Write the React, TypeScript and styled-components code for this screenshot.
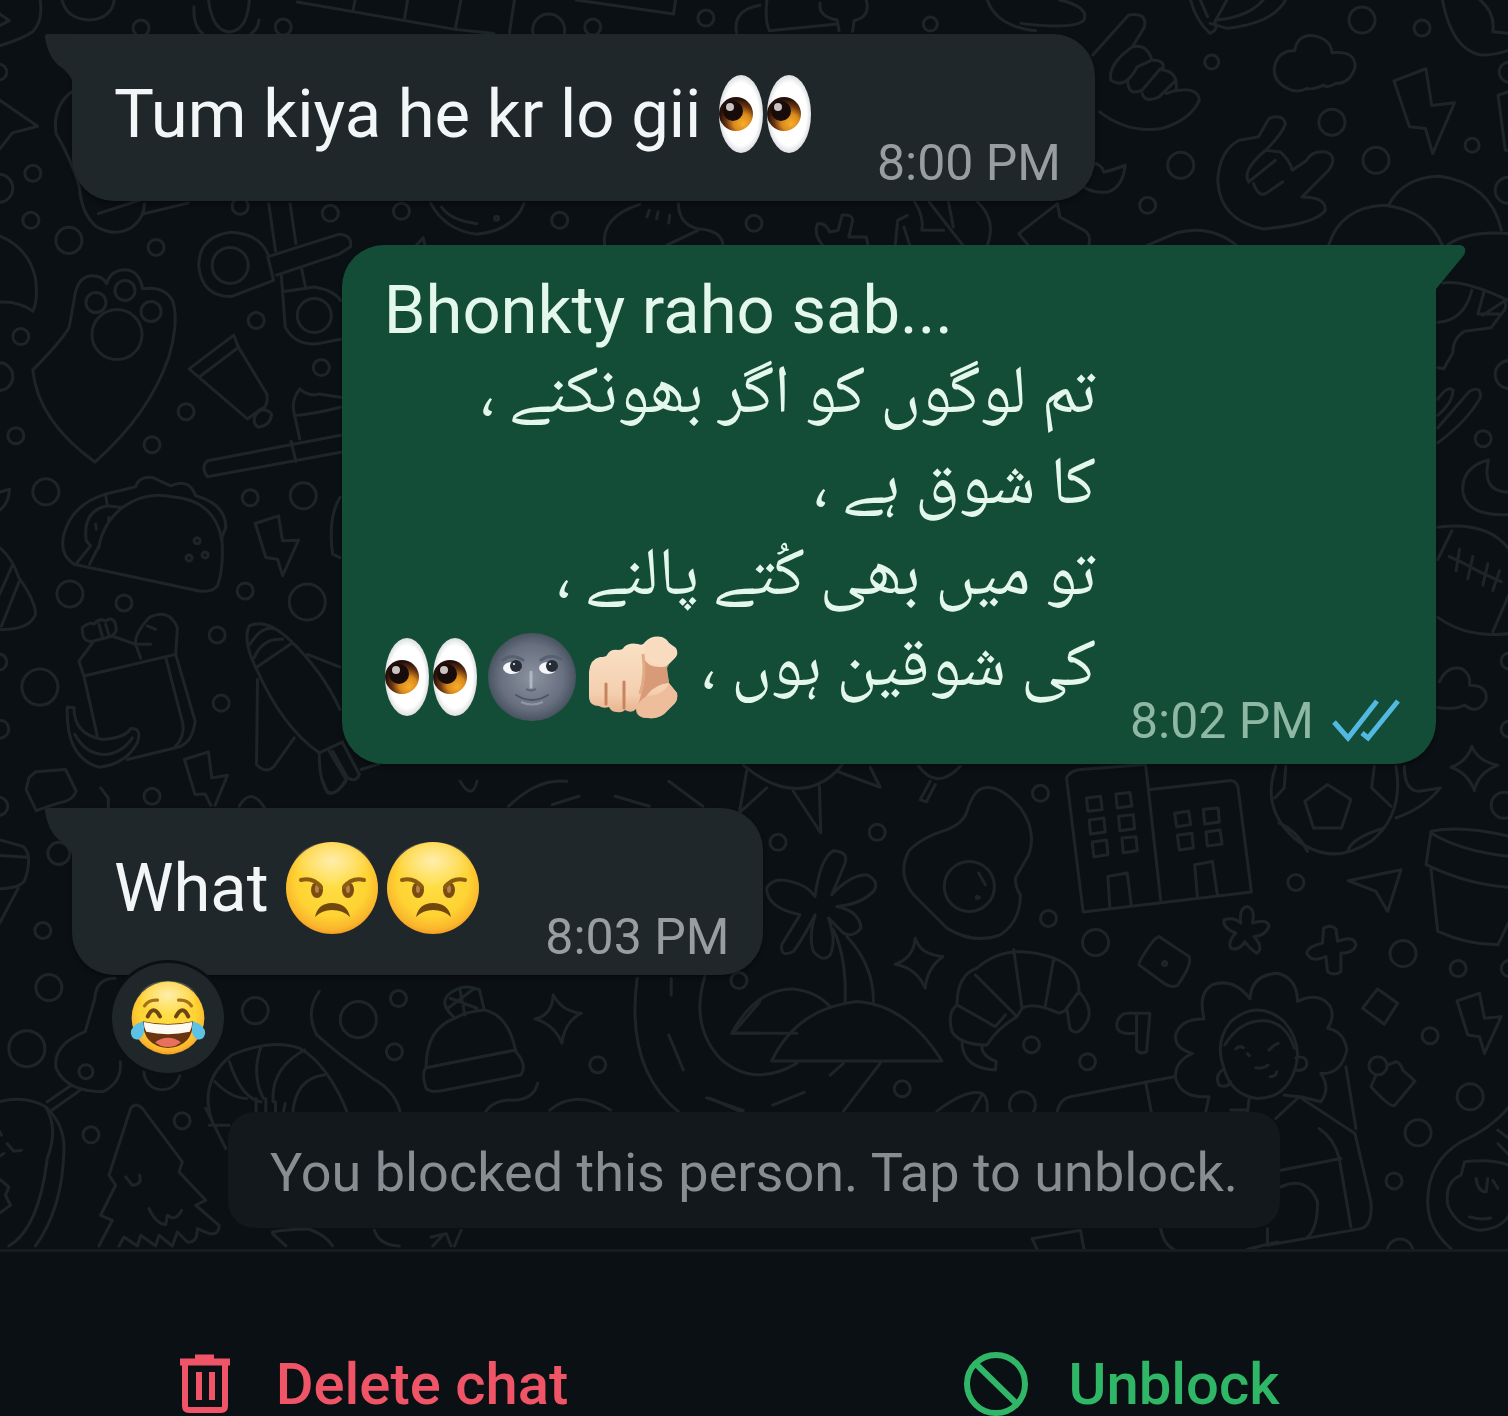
import React from "react";
import styled, { createGlobalStyle, css } from "styled-components";

const color = {
  page: "#0b1014",
  doodle: "#1e2528",
  incoming: "#1f272a",
  outgoing: "#144d37",
  notice: "#12181b",
  text: "#f3f6f7",
  outgoingText: "#e4f7ec",
  time: "#979da0",
  outgoingTime: "#8fb8a4",
  noticeText: "#868e92",
  danger: "#ef5567",
  accent: "#2fb767",
  read: "#53b9e0",
};

const GlobalStyle = createGlobalStyle`
  *, *::before, *::after { box-sizing: border-box; }
  body {
    margin: 0;
    background: ${color.page};
    color: ${color.text};
    font-family: Roboto, "Noto Sans", "Liberation Sans", sans-serif;
  }
  button {
    margin: 0;
    padding: 0;
    border: 0;
    background: none;
    font: inherit;
    cursor: pointer;
  }
`;

const Screen = styled.div`
  display: flex;
  flex-direction: column;
  min-height: 100vh;
`;

const Chat = styled.main`
  position: relative;
  flex: 1;
  overflow: hidden;
`;

const Wallpaper = styled.svg`
  position: absolute;
  inset: 0;
  width: 100%;
  height: 100%;
  fill: none;
  stroke: ${color.doodle};
  stroke-width: 3px;
  stroke-linecap: round;
  stroke-linejoin: round;

  path {
    vector-effect: non-scaling-stroke;
  }
`;

const Thread = styled.div`
  position: relative;
  display: flex;
  flex-direction: column;
  gap: 44px;
  padding: 34px 72px 20px;
`;

const Message = styled.article<{ $own?: boolean }>`
  display: flex;
  flex-direction: column;
  align-items: ${(p) => (p.$own ? "flex-end" : "flex-start")};
`;

const incomingShape = css`
  background: ${color.incoming};
  color: ${color.text};
  border-radius: 0 42px 42px 42px;
  padding: 41px 34px 9px 42px;
  column-gap: 58px;

  &::before {
    right: 100%;
    width: 29px;
    height: 48px;
    margin-right: -1px;
    background: ${color.incoming};
    clip-path: path("M29 0 H4 Q0 0 1 4 Q4 22 14 31 Q24 37 29 48 Z");
  }
`;

const outgoingShape = css`
  background: ${color.outgoing};
  color: ${color.outgoingText};
  border-radius: 42px 0 42px 42px;
  padding: 26px 36px 14px 42px;
  column-gap: 34px;

  &::before {
    left: 100%;
    width: 31px;
    height: 46px;
    margin-left: -1px;
    background: ${color.outgoing};
    clip-path: path("M0 0 H25 Q33 2 29 10 L1 44 L0 46 Z");
  }
`;

const Bubble = styled.div<{ $own?: boolean }>`
  position: relative;
  display: flex;
  align-items: flex-end;
  box-shadow: 0 3px 4px rgba(0, 0, 0, 0.3);

  &::before {
    content: "";
    position: absolute;
    top: 0;
  }

  ${(p) => (p.$own ? outgoingShape : incomingShape)}
`;

const Body = styled.div<{ $own?: boolean }>`
  padding-bottom: ${(p) => (p.$own ? 34 : 39)}px;
`;

const Line = styled.p`
  margin: 0;
  font-size: 67px;
  line-height: 78px;
`;

const Verse = styled.p`
  margin: 0;
  font-family: "Noto Naskh Arabic UI", "Noto Naskh Arabic", "Noto Sans Arabic", "DejaVu Sans", sans-serif;
  font-size: 68px;
  line-height: 91px;
  white-space: pre-line;
`;

const Meta = styled.footer<{ $own?: boolean }>`
  display: flex;
  align-items: center;
  gap: 18px;
  color: ${(p) => (p.$own ? color.outgoingTime : color.time)};
  font-size: 50px;
  line-height: 58px;
  white-space: nowrap;
`;

const Ticks = styled.svg`
  width: 68px;
  height: 46px;
  fill: none;
  stroke: ${color.read};
  stroke-width: 5px;
`;

const EmojiArt = styled.svg<{ $size?: number }>`
  width: ${(p) => p.$size ?? 94}px;
  height: ${(p) => p.$size ?? 94}px;
`;

const InlineEmoji = styled.span`
  svg {
    margin: -8px 7px -8px 0;
    vertical-align: -16px;
  }

  ${Verse} & svg {
    vertical-align: -22px;
  }
`;

const Reaction = styled.button`
  position: relative;
  display: grid;
  place-items: center;
  width: 118px;
  height: 116px;
  margin: -15px 0 0 37px;
  border: 3px solid ${color.page};
  border-radius: 50%;
  background: ${color.incoming};
`;

const Notice = styled.button`
  align-self: center;
  padding: 28px 42px 22px;
  margin-top: -8px;
  border-radius: 26px;
  background: ${color.notice};
  color: ${color.noticeText};
  font-size: 54px;
  line-height: 66px;
`;

const Actions = styled.footer`
  display: grid;
  grid-template-columns: 1fr 1fr;
  padding: 100px 12px 0 0;
  border-top: 3px solid #161d20;
  background: ${color.page};
`;

const Action = styled.button<{ $tone: "danger" | "accent" }>`
  display: flex;
  align-items: center;
  justify-content: center;
  gap: ${(p) => (p.$tone === "danger" ? 46 : 40)}px;
  color: ${(p) => color[p.$tone]};
  font-size: 58px;
  font-weight: 500;
  line-height: 64px;
`;

const ActionIcon = styled.svg`
  flex: none;
  fill: none;
  stroke: currentColor;
`;

/* ---------- wallpaper doodles ---------- */

const dots: [number, number, number][] = [
  [142, 28, 8], [284, 27, 8], [706, 18, 8], [549, 30, 16], [593, 27, 8], [34, 173, 8], [0, 188, 14],
  [32, 220, 8], [70, 240, 13], [157, 247, 8], [257, 320, 8], [22, 336, 8], [0, 376, 14], [322, 367, 8],
  [187, 411, 8], [17, 435, 8], [153, 444, 8], [241, 206, 8], [331, 213, 8], [402, 211, 8], [560, 220, 8],
  [754, 223, 8], [97, 302, 10], [126, 290, 10], [152, 311, 10], [118, 334, 25], [231, 265, 18],
  [315, 315, 17], [0, 72, 8], [930, 24, 7], [1211, 62, 7], [1361, 20, 13], [1421, 28, 8], [1331, 122, 13],
  [1180, 165, 13], [1375, 160, 13], [1147, 205, 8], [1471, 145, 7], [1508, 72, 10], [1507, 190, 13],
  [1482, 438, 8], [1508, 374, 14], [1508, 660, 8], [1508, 728, 8], [47, 491, 13], [251, 497, 8],
  [304, 495, 13], [71, 593, 13], [125, 602, 8], [246, 590, 8], [308, 601, 18], [218, 634, 8], [222, 702, 8],
  [41, 686, 18], [0, 661, 8], [1, 728, 9], [153, 795, 8], [0, 805, 9], [1040, 792, 8], [1295, 881, 8],
  [1048, 917, 8], [1095, 941, 13], [1402, 952, 13], [1457, 967, 8], [1503, 804, 13], [1508, 967, 8],
  [44, 929, 8], [50, 986, 13], [28, 1047, 18], [256, 1009, 13], [359, 1018, 18], [399, 997, 8],
  [395, 1050, 8], [598, 1063, 8], [60, 852, 11], [163, 1070, 18], [739, 979, 8], [778, 841, 8],
  [877, 831, 8], [902, 1087, 8], [1031, 1043, 8], [1087, 1060, 8], [1022, 1103, 13], [969, 885, 25],
  [92, 1133, 8], [183, 1119, 8], [1429, 1034, 8], [1469, 1095, 13], [1417, 1131, 13], [1393, 1179, 8],
  [1377, 1064, 9], [1399, 1250, 13], [1164, 962, 2], [87, 1070, 7], [198, 540, 3], [190, 557, 3], [206, 554, 3],
  [977, 896, 1], [497, 218, 2],
];

const doodles: { place: string; d: string[] }[] = [
  {
    /* top left: star, monster, binoculars, badge, tube */
    place: "scale(.4847 .3333)",
    d: [
      "M85 0Q92 60 70 95Q50 115 0 138M0 40L22 62L0 78",
      "M130 0Q140 58 188 60Q232 55 238 0",
      "M402 20Q400 80 420 100M432 0Q440 92 475 96Q512 92 516 0M536 60Q534 88 520 100",
      "M615 6L940 88L952 0M730 28L734 0M836 54L842 0M1062 0L1052 98M940 88L1020 100M1190 0L1390 42L1394 0",
      "M1520 100Q1510 30 1568 16",
      "M0 298L80 378L28 398L0 450",
      "M150 275Q110 320 118 400Q150 480 166 560Q170 640 200 678Q240 712 275 680Q300 650 300 610M205 640L290 600M300 640L390 608",
      "M0 706Q60 740 75 830Q82 900 70 932Q40 900 0 905",
      "M155 900Q160 830 190 826Q215 825 222 850Q230 808 262 808Q290 812 296 865Q340 855 358 900Q372 960 350 1070Q310 1240 198 1384Q80 1260 70 1108Q130 1020 145 980Z",
      "M556 610L570 752M600 610L612 730M556 768L700 702Q730 705 724 740L700 762L572 824M556 768Q540 700 478 696Q410 710 412 800Q420 890 480 888L566 840L554 768M582 826L590 980Q610 1035 655 1030L704 1016M624 806L632 862M584 874L650 860Q690 870 704 900",
      "M392 1105L484 1004L494 1040L412 1130ZM492 1036L552 1180Q556 1220 540 1225L512 1255L412 1130M530 1240Q545 1215 562 1240Q560 1275 535 1280Q520 1265 530 1240",
      "M890 610Q920 690 985 702Q1060 690 1082 610M912 620Q930 660 985 670M860 735L874 712L878 735",
      "M1248 735Q1240 650 1320 612M1335 650L1340 630M1355 655L1358 635M1380 668L1382 645M1400 610Q1400 670 1440 685Q1490 690 1492 735M1375 735L1440 690",
      "M704 1190L660 1180Q640 1190 620 1165Q602 1200 608 1235L620 1315M608 1245Q650 1240 704 1220M704 1304L430 1380Q415 1400 430 1428L704 1355M602 1322L612 1382",
    ],
  },
  {
    /* top right: shaka and horns hands, cloud, bolt, leaf */
    place: "translate(750 0) scale(.4834 .3333)",
    d: [
      "M35 0Q30 60 40 92L180 72M145 10Q140 50 180 60L184 92M240 0Q250 50 215 62L212 94",
      "M490 0Q510 80 590 92M640 0Q700 20 690 60Q670 90 560 70",
      "M910 0Q920 60 950 100Q968 90 960 65L985 0M950 70L985 85Q1080 70 1106 0M965 60Q1030 50 1060 0M930 0L945 50",
      "M708 165L782 45Q820 35 815 80L790 140M790 140Q820 130 830 180Q860 180 852 210Q885 215 880 270L860 280M790 140Q740 190 745 240Q775 270 800 200L830 180M780 240Q780 290 810 270L848 205M810 280Q815 310 845 290L880 240M880 272Q925 260 928 300Q910 360 850 385Q780 400 722 335",
      "M1110 265Q1075 240 1085 190Q1095 150 1125 152Q1130 105 1160 106Q1200 115 1202 158Q1250 150 1250 200Q1240 250 1210 250Q1190 265 1185 255Q1160 270 1150 265Q1130 280 1110 265Z",
      "M1330 242L1396 206L1408 316L1455 308L1410 460L1395 385L1362 380Z",
      "M1430 0Q1450 150 1510 165Q1540 165 1568 150M1508 0Q1540 40 1534 95L1568 100",
      "M1568 275L1545 285L1560 450L1568 450",
      "M1050 410L1072 355Q1100 340 1106 370Q1100 400 1065 450L1095 455Q1115 480 1120 510L1150 480Q1160 450 1190 455Q1215 470 1195 510L1140 590Q1190 590 1188 630Q1170 670 1060 686Q970 660 966 540Q970 450 1010 420ZM1065 450Q1015 510 1030 545L1085 480M1040 550Q1050 590 1065 580L1100 545",
      "M700 500L715 490Q730 500 730 515Q750 510 775 495Q770 560 740 575Q710 580 690 560",
      "M150 735Q130 700 140 670Q155 665 165 695L182 690L190 645Q210 640 212 660L204 710L240 710L244 735M300 735L305 660L325 645M318 680L330 735M340 605Q360 650 355 690L400 690M370 605L440 735M410 605L420 680M470 605Q510 660 490 735",
      "M555 700L635 610L640 650L690 690Q705 700 700 735M555 700L575 735M820 735L880 698Q950 670 1005 735",
      "M1195 735Q1220 620 1310 615Q1400 630 1430 735M1320 612Q1350 530 1425 528Q1530 550 1552 690M1440 735Q1480 690 1568 700",
    ],
  },
  {
    /* right edge beside the outgoing bubble */
    place: "translate(1400 220) scale(.3333 .3571)",
    d: [
      "M125 175Q190 165 324 225M110 285Q190 280 212 195M250 195L230 262L300 262Q320 245 310 225L245 265M300 262L270 300L190 310Q155 330 155 370L128 415L110 412",
      "M110 500Q140 460 156 475Q155 510 110 545M110 580L205 478Q240 460 238 495Q200 560 110 622",
      "M262 670Q180 690 185 760Q200 830 324 822M262 670Q240 760 324 760",
      "M110 858Q260 840 324 920M110 948L152 868M110 1110Q200 1170 324 1155M275 1150L324 1045",
      "M145 940L190 960L240 985L300 1010M175 920L165 980M215 940L200 1002M260 960L245 1020M295 980L275 1035",
      "M115 1290Q140 1240 185 1255Q210 1270 205 1300Q260 1300 255 1340Q230 1385 190 1355Q160 1370 110 1362",
    ],
  },
  {
    /* left edge: taco, cookie, lunch bag, banana, rocket */
    place: "translate(0 380) scale(.3333)",
    d: [
      "M0 390Q30 370 32 325L0 335",
      "M0 498Q40 530 60 590Q110 660 110 700Q90 750 0 745M40 555L0 645M62 600L8 735",
      "M225 550Q180 520 195 460Q220 370 320 340L410 318Q420 285 460 290L515 315Q570 290 590 345Q680 370 680 440L668 470Q675 560 655 615Q640 635 600 630L225 550M300 500Q310 430 370 380Q440 330 520 348Q650 360 668 480M320 340L325 375Q250 390 262 480L275 495L235 545M300 495L272 550M325 375L368 380M290 430L292 445M330 410L328 420",
      "M768 428L838 405L850 480L898 478L850 584L835 535L800 530Z",
      "M1022 350Q985 410 1000 520L1022 530",
      "M255 885L240 840L285 780L340 765L410 790Q405 760 450 710Q510 680 535 740L530 820L255 885L295 1065M285 780Q250 790 250 740Q275 720 285 730Q300 710 320 720Q350 700 352 750L340 765M300 730L310 765M320 730L330 762M410 790L425 832M410 790L455 790M445 735L470 745M500 830L552 1030Q555 1070 530 1095M530 820L588 1020Q580 1090 530 1100L385 1135",
      "M205 978L225 980Q225 1060 310 1075Q380 1070 395 1042Q430 1040 415 1085Q380 1150 300 1158Q200 1130 205 978M228 1060Q260 1120 320 1120Q370 1115 400 1070",
      "M90 1190L110 1172L200 1165L232 1230Q220 1260 180 1265L112 1288L82 1225Z",
      "M305 1220L328 1250V1278M720 1275Q755 1215 795 1278",
      "M556 1135L628 1112L638 1190L685 1182L648 1272M556 1135L588 1240L618 1238L635 1272",
      "M770 860Q730 780 750 735Q800 710 870 775Q970 870 1022 985M770 860L880 785M752 790Q790 730 830 745M765 830Q790 770 850 775M770 860Q850 1040 960 1115L1030 1082M775 895L772 1150Q800 1180 825 1155L885 1070M925 820L1022 858M960 1120Q960 1200 985 1235Q1010 1245 1040 1195L990 1110M1000 1110L1045 1190Q1070 1205 1080 1180L1030 1085M1085 1165L1140 1148",
    ],
  },
  {
    /* right of centre: buildings, football, bolt, flower pot */
    place: "translate(1000 680) scale(.3333)",
    d: [
      "M248 692L198 290Q210 268 240 265L435 250L480 655M450 325L690 298Q708 300 712 320L752 632L248 692M328 680L322 585L380 575L392 672M590 645L582 550L635 540L650 640",
      "M258 350L300 345L305 385L262 390ZM346 338L388 334L394 374L350 380ZM266 416L310 410L314 452L270 458ZM354 405L398 400L402 442L358 448ZM275 482L318 476L322 520L280 526ZM364 470L406 466L410 508L368 514ZM522 396L564 390L570 430L528 436ZM608 384L652 380L656 422L612 428ZM530 462L574 456L578 500L536 506ZM616 452L658 446L664 488L620 494Z",
      "M825 255Q780 380 880 470Q990 560 1110 480Q1210 400 1185 255M980 310L1050 355L1022 440H938L912 360ZM855 255L850 320L822 350M835 425Q890 450 920 510M1040 510Q1050 470 1150 440M1120 255L1112 320L1170 375M1210 255Q1210 330 1255 330L1318 320Q1270 380 1185 410",
      "M1412 195Q1430 240 1490 252Q1430 275 1420 328Q1400 275 1350 258Q1400 240 1412 195Z",
      "M1042 598L1200 565L1160 690L1125 630Z",
      "M1524 465Q1380 430 1290 450L1275 550Q1400 610 1524 618M1290 455Q1380 510 1524 525M1290 565L1310 750Q1400 790 1490 790L1524 720",
      "M738 675Q765 680 755 725Q800 710 805 735Q790 765 760 765Q790 800 768 815Q745 800 732 780Q715 810 690 800Q680 780 705 755Q665 740 670 715Q700 705 720 725Q715 680 738 675Z",
      "M968 740Q990 728 1005 742L1010 780Q1060 760 1065 790Q1060 815 1020 815L1020 870Q1000 885 980 870L975 825Q930 845 918 815Q920 795 965 785Z",
      "M475 765L565 825Q575 850 530 912Q510 920 490 905L415 850Q415 835 460 775Z",
    ],
  },
  {
    /* centre: sun, egg, palm island, croissant */
    place: "translate(700 740) scale(.3333)",
    d: [
      "M130 72Q210 140 290 142Q370 140 425 72M140 90L118 215L200 140M280 150L362 275L358 135M410 90L540 138L510 78M655 75Q710 150 780 75M690 120L660 175L678 182L705 130",
      "M850 140Q900 130 960 200Q1010 270 985 340L945 410Q945 440 960 460Q960 540 900 580Q820 610 740 560L640 460Q590 400 625 330Q660 290 740 265Q790 245 800 210Q820 145 850 140ZM835 395L855 430M830 465L838 468",
      "M345 465Q360 350 400 328Q445 330 435 365L395 460Q450 400 500 400Q540 420 520 450Q480 490 410 495Q480 510 482 560Q460 590 430 575L385 530Q410 600 390 640Q370 665 340 630Q325 590 345 520Q310 590 280 630Q240 650 245 610L300 520Q200 500 200 440Q220 405 270 420Q320 430 345 465M400 565Q440 650 435 780M440 585Q520 670 520 780",
      "M725 958H215Q290 800 470 780Q620 790 725 958M290 875H95Q170 740 280 742Q350 750 390 795M15 705Q-30 850 60 950Q160 1040 290 965M430 965L390 1000M540 965L430 1108M20 1068L130 1106M218 1090L312 1052",
      "M645 590Q660 640 728 645Q680 680 675 740Q650 680 585 668Q640 650 645 590Z",
      "M950 825Q890 860 860 910Q780 910 755 870Q740 810 770 790Q770 700 830 680Q920 600 1060 650Q1140 680 1135 750Q1180 800 1160 840Q1130 890 1108 860L1100 805L1075 815Q1000 780 965 800ZM940 625L965 800L950 825L825 700M770 790L885 855L915 820M1060 650L1035 790M1135 750L1095 805M785 905Q790 980 885 985L888 960Q840 940 845 910",
      "M1300 875Q1240 880 1250 840Q1260 810 1300 815H1348L1338 930Q1320 940 1308 925V818",
      "M710 1108Q800 1040 845 1055Q865 1070 860 1110M815 1110L845 1060M1070 1108Q1080 1070 1110 1065L1420 1005M1335 1020L1352 1110",
    ],
  },
  {
    /* below the last bubble: cup, bobble hat, seashell */
    place: "translate(0 780) scale(.4847 .3333)",
    d: [
      "M668 0Q680 70 715 0M950 0Q975 60 985 0M1050 75Q1110 -10 1170 0M1380 0L1450 75M1140 70L1195 45M1270 45L1340 75",
      "M0 175L50 195Q70 220 55 290Q50 320 0 322M0 222L60 228M40 320L0 430",
      "M240 590Q200 590 198 650L178 750Q110 790 118 860Q140 930 215 930Q255 900 250 840M150 910L100 960M168 925L110 985",
      "M660 630Q630 690 655 760Q700 820 770 890Q820 930 828 1000",
      "M940 710Q880 740 880 860Q870 870 880 920Q890 935 920 925L1075 880Q1090 850 1065 810Q1050 700 1000 685M940 710Q900 660 935 630Q960 605 990 625L1000 685Q960 690 940 710M930 650L985 680M950 625L960 700M980 620L925 680M880 858L1065 805",
      "M1142 640Q1160 690 1200 695Q1165 720 1160 785Q1145 730 1105 712Q1140 700 1142 640Z",
      "M1315 590Q1290 860 1400 990M1385 590V640M1380 760L1410 865M1568 660L1512 755H1568M1110 905Q1100 960 1050 955Q1010 960 1000 1000M1135 985Q1190 920 1260 985M1465 950L1530 990",
      "M440 1020Q410 900 480 820Q560 770 620 800Q680 850 720 1000M445 900Q480 950 510 950M475 840Q500 950 540 960M540 795Q520 880 545 950M630 805Q560 860 565 960M670 880Q610 890 605 1000M530 950V1000M550 950V1000M570 960V1000M590 965L585 1000",
    ],
  },
  {
    /* bottom left: bird and fir tree */
    place: "translate(0 1040) scale(.3333)",
    d: [
      "M0 180Q80 160 140 195Q200 250 195 330Q190 500 110 612M140 195Q180 260 145 350Q120 560 30 612M0 265L8 280M0 345L15 335M25 305L45 328L68 325M0 410L30 435L20 460L35 490L0 515",
      "M300 612L340 535L305 520L350 430L330 400L395 200Q410 180 430 200L550 360L540 390L620 475L590 490L660 550Q660 580 630 575L595 560Q595 605 565 600L535 570L520 612L480 580L470 612L425 580L415 612L375 585L360 612M380 405L400 430Q430 430 422 400M450 500Q470 545 500 548L505 520Q530 540 548 505",
      "M630 250H690M620 200L680 320M820 570Q870 560 930 562Q980 580 1000 612M820 575L860 612M1125 565Q1140 610 1200 612M1295 585L1340 575L1355 612M1300 612L1330 580M1385 565L1365 612",
    ],
  },
  {
    /* bottom right: girl with a book, bolt, baby */
    place: "translate(1000 960) scale(.3333)",
    d: [
      "M615 450L625 405Q540 410 525 350Q520 300 575 275Q520 260 525 220Q540 170 610 172Q590 90 640 68Q700 50 748 112Q750 40 830 35Q890 50 890 120Q950 90 985 130Q1005 160 980 200Q1030 210 1038 265Q1020 340 960 335Q990 380 960 420L900 405Q880 405 850 400M670 320Q640 240 690 180Q770 110 850 180Q910 250 880 330Q850 410 770 410Q690 400 670 320M672 250Q720 170 800 178Q860 190 880 260M670 322Q640 340 655 370Q680 380 690 360M885 288Q920 280 918 310Q910 330 885 325M705 262Q715 250 728 258M740 276L746 282M805 265Q818 250 832 245M765 318Q790 322 802 310M808 345Q825 345 828 330",
      "M745 412L740 455M690 445H740M895 405L825 470M895 405L1062 515L1110 720Q1115 790 1080 800L800 850L800 800M1035 315L1065 500M955 500Q1000 530 1015 590L1050 795M840 625L1020 590M840 675Q920 640 950 720Q950 800 920 825M740 862L830 840M480 800Q490 850 520 862M95 830L240 805L250 860M95 830L110 862",
      "M1130 82L1190 125L1150 188L1085 140Z",
      "M1368 118L1435 95L1450 170L1500 165L1450 275L1435 225L1400 220Z",
      "M1160 310L1185 300Q1200 305 1205 325L1242 358L1180 432Q1165 435 1110 375L1125 340",
      "M1524 435Q1470 500 1380 540Q1280 600 1280 720Q1280 800 1350 860M1490 505L1524 530M1490 545L1524 580M1524 610Q1470 590 1390 600L1380 640Q1330 660 1340 730Q1370 800 1440 805Q1500 800 1524 760M1425 650Q1430 690 1455 690L1460 650M1475 655L1490 680M1405 765Q1440 775 1468 768",
    ],
  },
];

function DoodleWallpaper() {
  return (
    <Wallpaper viewBox="0 0 1508 1247" preserveAspectRatio="xMidYMid slice" aria-hidden="true">
      {dots.map(([x, y, r]) => (
        <circle key={`${x}-${y}`} cx={x} cy={y} r={r} />
      ))}
      {doodles.map((group) => (
        <g key={group.place} transform={group.place}>
          {group.d.map((d) => (
            <path key={d} d={d} />
          ))}
        </g>
      ))}
    </Wallpaper>
  );
}

/* ---------- emoji ---------- */

const GradientDefs = styled.svg`
  position: absolute;
  width: 0;
  height: 0;
`;

function EmojiGradients() {
  return (
    <GradientDefs aria-hidden="true">
      <defs>
        <radialGradient id="iris" cx="0.64" cy="0.68" r="0.62" fx="0.72" fy="0.8">
          <stop offset="0" stopColor="#f7ae2b" />
          <stop offset="0.42" stopColor="#d98a1c" />
          <stop offset="0.72" stopColor="#6b3510" />
          <stop offset="1" stopColor="#25100a" />
        </radialGradient>
        <radialGradient id="sclera" cx="0.5" cy="0.5" r="0.5">
          <stop offset="0.8" stopColor="#ffffff" />
          <stop offset="1" stopColor="#dcdfe0" />
        </radialGradient>
        <radialGradient id="moon" cx="0.5" cy="0.5" r="0.52">
          <stop offset="0" stopColor="#8a92a0" />
          <stop offset="0.7" stopColor="#68707f" />
          <stop offset="1" stopColor="#454f5c" />
        </radialGradient>
        <radialGradient id="face" cx="0.5" cy="0.42" r="0.6">
          <stop offset="0" stopColor="#ffdf45" />
          <stop offset="0.65" stopColor="#fed333" />
          <stop offset="0.88" stopColor="#fab62c" />
          <stop offset="1" stopColor="#f0941f" />
        </radialGradient>
        <radialGradient id="shine" cx="0.5" cy="0.35" r="0.5">
          <stop offset="0" stopColor="#fff0b8" stopOpacity="0.9" />
          <stop offset="1" stopColor="#fff0b8" stopOpacity="0" />
        </radialGradient>
        <linearGradient id="skin" x1="0" y1="0" x2="0" y2="1">
          <stop offset="0" stopColor="#fbe3c8" />
          <stop offset="0.7" stopColor="#f4cfaf" />
          <stop offset="1" stopColor="#e5aa85" />
        </linearGradient>
      </defs>
    </GradientDefs>
  );
}

function Eyes() {
  return (
    <EmojiArt viewBox="0 0 94 94" role="img" aria-label="👀">
      {[0, 48].map((x) => (
        <g key={x} transform={`translate(${x} 0)`}>
          <ellipse cx="23" cy="47" rx="22" ry="39" fill="url(#sclera)" />
          <circle cx="18" cy="47" r="17" fill="url(#iris)" />
          <circle cx="15" cy="44" r="10" fill="#170c09" />
          <circle cx="12" cy="40" r="4" fill="#c9c3c1" />
        </g>
      ))}
    </EmojiArt>
  );
}

function NewMoonFace() {
  return (
    <EmojiArt viewBox="0 0 94 94" role="img" aria-label="🌚">
      <circle cx="47" cy="47" r="44" fill="url(#moon)" />
      <path d="M18 30Q26 23 38 30M56 30Q66 23 76 29" fill="none" stroke="#566070" strokeWidth="3" strokeLinecap="round" />
      <ellipse cx="27" cy="38" rx="9" ry="6" fill="#f4f6f8" />
      <ellipse cx="63" cy="38" rx="9" ry="6" fill="#f4f6f8" />
      <circle cx="31" cy="36" r="6" fill="#262c36" />
      <circle cx="67" cy="36" r="6" fill="#262c36" />
      <circle cx="29" cy="34" r="1" fill="#fff" />
      <circle cx="65" cy="34" r="1" fill="#fff" />
      <path d="M46 42V57" stroke="#b0b7c2" strokeWidth="3" strokeLinecap="round" />
      <path d="M41 59Q46 62 51 59" fill="none" stroke="#59626f" strokeWidth="2" />
      <path d="M31 65Q47 75 63 65" fill="none" stroke="#4d5664" strokeWidth="2" strokeLinecap="round" />
      <path d="M36 72Q47 77 58 72" fill="none" stroke="#8f97a4" strokeWidth="2" />
    </EmojiArt>
  );
}

function PointingHand() {
  return (
    <EmojiArt viewBox="0 0 94 94" role="img" aria-label="🫵🏻">
      <path
        d="M3 68V42Q4 29 14 27Q20 27 21 25Q24 19 32 20Q37 20 38 17Q43 12 52 14Q57 16 59 12Q66 5 76 7Q81 9 83 13L90 18Q93 24 89 28L80 37L83 53L91 63Q92 69 89 73L78 84Q72 89 62 88Q50 88 50 79Q46 84 39 80Q36 83 31 82Q25 82 23 77Q17 79 13 76Q4 76 3 68Z"
        fill="url(#skin)"
      />
      <path d="M58 28Q62 38 76 37Q82 37 84 33L81 38L83 53Q70 54 62 64Q57 70 52 76Q60 50 58 28Z" fill="#d89a77" />
      <path d="M59 14Q68 4 78 9L90 19Q92 25 86 30Q76 36 65 32Q57 26 59 14Z" fill="#f9dcbf" />
      <path d="M51 78Q54 66 68 65Q78 63 83 54L91 63Q92 69 89 73L78 84Q72 89 62 88Q51 88 51 78Z" fill="#eebd9b" />
      <path d="M20 54V74M38 52V78" fill="none" stroke="#c58360" strokeWidth="3" strokeLinecap="round" />
      <path d="M57 24Q60 46 54 64" fill="none" stroke="#e2ab88" strokeWidth="3" />
    </EmojiArt>
  );
}

function AngryFace() {
  return (
    <EmojiArt viewBox="0 0 94 94" role="img" aria-label="😠">
      <circle cx="47" cy="47" r="46" fill="url(#face)" />
      <ellipse cx="47" cy="28" rx="40" ry="27" fill="url(#shine)" />
      <ellipse cx="32" cy="49" rx="6" ry="8" fill="#7a4c12" />
      <ellipse cx="63" cy="49" rx="6" ry="8" fill="#7a4c12" />
      <ellipse cx="32" cy="48" rx="2" ry="4" fill="#b48446" />
      <ellipse cx="63" cy="48" rx="2" ry="4" fill="#b48446" />
      <path d="M16 39Q28 36 36 46M79 39Q67 36 59 46" fill="none" stroke="#8a5d12" strokeWidth="4" strokeLinecap="round" />
      <path d="M30 76Q33 62 47 62Q62 62 65 76Q58 69 47 69Q37 69 30 76Z" fill="#70470c" />
    </EmojiArt>
  );
}

function JoyFace() {
  return (
    <EmojiArt viewBox="0 0 94 94" $size={76} role="img" aria-label="😂">
      <circle cx="47" cy="47" r="45" fill="url(#face)" />
      <ellipse cx="47" cy="26" rx="38" ry="25" fill="url(#shine)" />
      <path d="M18 32Q23 24 34 25M76 32Q71 24 60 25" fill="none" stroke="#a8701a" strokeWidth="4" strokeLinecap="round" />
      <path d="M22 45Q29 30 37 45M57 45Q65 30 72 45" fill="none" stroke="#6b4515" strokeWidth="5" strokeLinecap="round" />
      <path d="M16 51Q47 58 78 51Q78 82 47 84Q16 82 16 51Z" fill="#6a3410" />
      <path d="M17 52Q47 59 77 52Q77 58 74 64Q47 70 20 64Q17 58 17 52Z" fill="#fdfaf2" />
      <path d="M31 77Q47 66 63 77Q56 83 47 83Q38 83 31 77Z" fill="#e8705c" />
      <path d="M16 51Q1 56 1 66Q3 76 12 73Q20 68 16 51ZM78 51Q93 56 93 66Q91 76 82 73Q74 68 78 51Z" fill="#5cc3e6" />
    </EmojiArt>
  );
}

/* ---------- screen ---------- */

export default function App() {
  return (
    <Screen>
      <GlobalStyle />
      <EmojiGradients />
      <Chat>
        <DoodleWallpaper />
        <Thread>
          <Message>
            <Bubble>
              <Body>
                <Line>
                  Tum kiya he kr lo gii{" "}
                  <InlineEmoji>
                    <Eyes />
                  </InlineEmoji>
                </Line>
              </Body>
              <Meta>
                <time>8:00 PM</time>
              </Meta>
            </Bubble>
          </Message>

          <Message $own>
            <Bubble $own>
              <Body $own>
                <Line>Bhonkty raho sab...</Line>
                <Verse dir="rtl" lang="ur">
                  {"تم لوگوں کو اگر بھونکنے ،\nکا شوق ہے ،\nتو میں بھی کُتے پالنے ،\nکی شوقین ہوں ، "}
                  <InlineEmoji>
                    <PointingHand />
                    <NewMoonFace />
                    <Eyes />
                  </InlineEmoji>
                </Verse>
              </Body>
              <Meta $own>
                <time>8:02 PM</time>
                <Ticks viewBox="0 0 68 46" role="img" aria-label="Read">
                  <path d="M2 24L16 40L45 3M30 35L36 40L66 3" />
                </Ticks>
              </Meta>
            </Bubble>
          </Message>

          <Message>
            <Bubble>
              <Body>
                <Line>
                  What{" "}
                  <InlineEmoji>
                    <AngryFace />
                    <AngryFace />
                  </InlineEmoji>
                </Line>
              </Body>
              <Meta>
                <time>8:03 PM</time>
              </Meta>
            </Bubble>
            <Reaction type="button">
              <JoyFace />
            </Reaction>
          </Message>

          <Notice type="button">You blocked this person. Tap to unblock.</Notice>
        </Thread>
      </Chat>

      <Actions>
        <Action type="button" $tone="danger">
          <ActionIcon width="50" height="60" viewBox="0 0 50 60" aria-hidden="true">
            <path d="M0 8H50" strokeWidth="7" />
            <path d="M15 3H34" strokeWidth="5" />
            <path d="M5 8V52Q5 56 9 56H41Q45 56 45 52V8" strokeWidth="6" />
            <path d="M19 18V46M32 18V46" strokeWidth="6" />
          </ActionIcon>
          Delete chat
        </Action>
        <Action type="button" $tone="accent">
          <ActionIcon width="64" height="64" viewBox="0 0 64 64" aria-hidden="true">
            <circle cx="32" cy="32" r="29" strokeWidth="6" />
            <path d="M12 12L53 52" strokeWidth="6" />
          </ActionIcon>
          Unblock
        </Action>
      </Actions>
    </Screen>
  );
}
